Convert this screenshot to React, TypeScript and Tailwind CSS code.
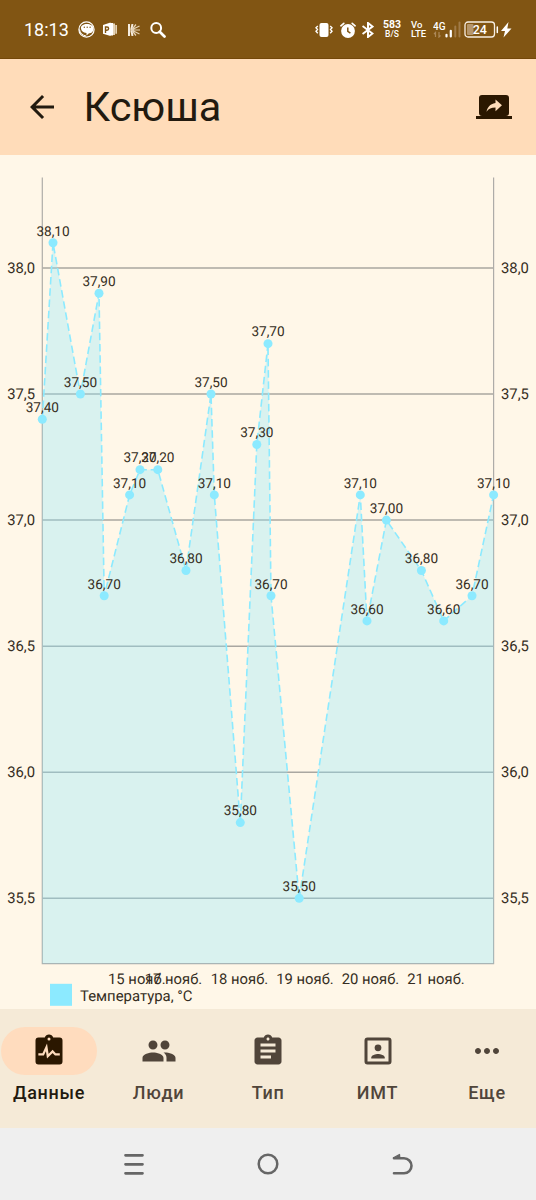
import { useState, type ReactNode } from 'react';
import { MdPeople, MdAssignment, MdMoreHoriz } from 'react-icons/md';

const points = [
  { x: 42.3, value: 37.4 },
  { x: 53, value: 38.1 },
  { x: 80.4, value: 37.5 },
  { x: 99, value: 37.9 },
  { x: 104.2, value: 36.7 },
  { x: 129.6, value: 37.1 },
  { x: 140, value: 37.2 },
  { x: 157.8, value: 37.2 },
  { x: 186, value: 36.8 },
  { x: 211, value: 37.5 },
  { x: 214.3, value: 37.1 },
  { x: 240.3, value: 35.8 },
  { x: 256.8, value: 37.3 },
  { x: 268, value: 37.7 },
  { x: 271, value: 36.7 },
  { x: 299.2, value: 35.5 },
  { x: 360.3, value: 37.1 },
  { x: 367, value: 36.6 },
  { x: 386.4, value: 37.0 },
  { x: 421.4, value: 36.8 },
  { x: 443.7, value: 36.6 },
  { x: 472, value: 36.7 },
  { x: 493.6, value: 37.1 },
];

const ticks = [38, 37.5, 37, 36.5, 36, 35.5];

const dates = [
  { x: 136.8, label: '15 нояб.' },
  { x: 173.5, label: '17 нояб.' },
  { x: 239.5, label: '18 нояб.' },
  { x: 305, label: '19 нояб.' },
  { x: 370.5, label: '20 нояб.' },
  { x: 436, label: '21 нояб.' },
];

const LEFT = 42.3;
const RIGHT = 493.6;
const TOP = 22.5;
const BOTTOM = 808.6;

const toY = (v: number) => 113 + (38 - v) * 252.1;
const format = (v: number, digits: number) => v.toFixed(digits).replace('.', ',');

function StatusBar() {
  return (
    <div className="h-[59px] bg-[#815513] border-b border-[#744809] text-white flex items-center justify-between pl-6 pr-6">
      <div className="flex items-center pt-px">
        <span className="text-[18px] leading-none w-[54px]">18:13</span>
        <svg className="w-[17px] h-[17px]" viewBox="0 0 17 17">
          <circle cx="8.5" cy="8.5" r="7.6" fill="none" stroke="white" strokeWidth="1.2" />
          <path d="M3 7.5C2 1.500 15.500 1.500 15.500 7.500c0 3.500-2.200 4.700-4.500 4.700L8.500 14.500v-2.500C5 11.700 3.300 10 3 7.500z" fill="white" />
          <path d="M1.500 8.500c.5 3.500 3 5.800 6.500 6.500" stroke="white" strokeWidth="1" fill="none" />
          <circle cx="6.300" cy="6.200" r=".7" fill="#815513" />
          <circle cx="9.200" cy="6.200" r=".7" fill="#815513" />
          <circle cx="12.100" cy="6.200" r=".7" fill="#815513" />
        </svg>
        <svg className="w-[14px] h-[15px] ml-2" viewBox="0 0 14 15">
          <path d="M0 3l7.500-2.500v13.500L0 11.800z" fill="white" />
          <path d="M2.500 11V5h1.500a1.500 1.500 0 0 1 0 3.200H2.500" fill="none" stroke="#815513" strokeWidth="1.400" />
          <path d="M7 1h3v12.500H7z" fill="white" />
          <path d="M10 1.500h2v11.500h-2zM12.300 3H14v8.700h-1.700z" fill="#e5d3b7" />
        </svg>
        <svg className="w-3 h-3 ml-[11px]" viewBox="0 0 12 12">
          <path d="M1 0v12M3.200 6L4.500 0M3.200 6L4.500 12" stroke="#f5ecdf" strokeWidth="2" />
          <path d="M3.500 6L8 .5M3.500 6L11.500 2M3.500 6h8.500M3.500 6l8 4M3.500 6L8 11.500" stroke="#e5d3b7" strokeWidth="1.200" />
        </svg>
        <svg className="w-4 h-4 ml-[10px]" viewBox="0 0 16 16" fill="none" stroke="white">
          <circle cx="6.200" cy="6" r="4.900" strokeWidth="2" />
          <path d="M9.700 9.700l4.800 4.800" strokeWidth="2.700" strokeLinecap="round" />
        </svg>
      </div>

      <div className="flex items-center pt-px">
        <svg className="w-[18px] h-4" viewBox="0 0 18 16">
          <rect x="4.500" y="1" width="9" height="14" rx="2" fill="white" />
          <path d="M2.800 4L1 5.700 2.500 7.500 1 9.300l1.800 2M15.200 4L17 5.700l-1.500 1.800L17 9.300l-1.800 2" stroke="white" strokeWidth="1.400" fill="none" />
        </svg>
        <svg className="w-4 h-4 ml-[7px]" viewBox="0 0 16 16">
          <circle cx="8" cy="9" r="6.900" fill="white" />
          <path d="M.9 3.800L3.800 1.300M15.100 3.800L12.200 1.300" stroke="white" strokeWidth="1.700" strokeLinecap="round" />
          <path d="M7.800 5.500V9.400l2.600 1.700" stroke="#815513" strokeWidth="1.500" fill="none" />
        </svg>
        <svg className="w-3 h-4 ml-[6px]" viewBox="0 0 12 16" fill="none" stroke="white" strokeWidth="2">
          <path d="M.5 4L10.500 11.500L6 15V1l4.500 3.500L.5 12" />
        </svg>
        <div className="flex flex-col items-center w-[18px] ml-[9px] font-bold -mt-[3px]">
          <span className="text-[10.500px] leading-[11px]">583</span>
          <span className="text-[8.500px] leading-[8px] font-medium">B/S</span>
        </div>
        <div className="flex flex-col w-[15px] ml-[10px] text-[9.500px] leading-[9px] font-medium -mt-[2px]">
          <span>Vo</span>
          <span>LTE</span>
        </div>
        <svg className="w-[29px] h-[17px] ml-[7px]" viewBox="0 0 29 17">
          <text x="0" y="8.500" fontSize="10" fontWeight="500" fill="white">4G</text>
          <path d="M2.500 16v-4.500L1 13M6 11v5l1.500-1.500" stroke="#ab8859" strokeWidth="1.200" fill="none" />
          <path d="M13.500 13.800V15.500M17.800 9.800V15.500" stroke="white" strokeWidth="2.200" strokeLinecap="round" />
          <path d="M22.300 5.500V15.500M26.500 1.500V15.500" stroke="#a07b48" strokeWidth="2" strokeLinecap="round" />
        </svg>
        <svg className="w-[35px] h-[17px] ml-[2px]" viewBox="0 0 35 17">
          <rect x="1" y="1" width="29.500" height="15" rx="3" fill="none" stroke="#f7efe4" strokeWidth="1.300" />
          <rect x="3" y="3" width="6.500" height="11" rx="1" fill="#b6966b" />
          <text x="15.800" y="12.800" fontSize="12.500" fontWeight="500" textAnchor="middle" fill="white">24</text>
          <path d="M33.300 6v5.500" stroke="white" strokeWidth="1.500" strokeLinecap="round" />
        </svg>
        <svg className="w-[11px] h-4 ml-[2px]" viewBox="0 0 11 16">
          <path d="M7.500 0L0 9h4L2.500 15.500 10.500 6.500H6.300z" fill="white" />
        </svg>
      </div>
    </div>
  );
}

function Header() {
  return (
    <div className="h-[95.500px] bg-[#ffdcb9] flex items-center px-6">
      <button className="w-9 h-9 text-[#221a0f]">
        <svg className="w-9 h-9" viewBox="0 0 24 24" fill="currentColor">
          <path d="M20 11H7.830l5.590-5.590L12 4l-8 8 8 8 1.410-1.410L7.830 13H20v-2z" />
        </svg>
      </button>
      <h1 className="text-[41.500px] leading-none text-[#221a0f] ml-[23.500px] flex-1">Ксюша</h1>
      <button className="text-[#2b1700]">
        <svg className="w-9 h-9" viewBox="0 0 24 24" fill="currentColor">
          <path d="M4 4h16a2 2 0 0 1 2 2v10a2 2 0 0 1-2 2h4v2H0v-2h4a2 2 0 0 1-2-2V6a2 2 0 0 1 2-2z" />
          <path d="M13 7v2.300c-3.900.5-5.400 3.200-6 5.900 1.400-1.900 3.200-2.800 6-2.800v2.400l4.300-3.900z" fill="#ffdcb9" />
        </svg>
      </button>
    </div>
  );
}

function Chart() {
  const line = points.map((p, i) => `${i === 0 ? 'M' : 'L'}${p.x} ${toY(p.value)}`).join(' ');

  return (
    <svg className="block w-[536px] h-[854.500px]" viewBox="0 0 536 854.5" textRendering="geometricPrecision">
      {ticks.map((t) => (
        <path key={t} d={`M${LEFT} ${toY(t)}H${RIGHT}`} stroke="#aaa7a1" strokeWidth="1.5" />
      ))}
      <path d={`M${LEFT} ${TOP}V${BOTTOM}H${RIGHT}V${TOP}`} fill="none" stroke="#aeaca8" strokeWidth="1.2" />
      <path d={`${line} L${RIGHT} ${BOTTOM} L${LEFT} ${BOTTOM}Z`} fill="#8ceaff" fillOpacity=".33" />
      <path d={line} fill="none" stroke="#8ceaff" strokeWidth="1.6" strokeDasharray="7.500 3.750" />
      {points.map((p, i) => (
        <circle key={i} cx={p.x} cy={toY(p.value)} r="4.500" fill="#8ceaff" />
      ))}
      <g fontSize="13.600" textAnchor="middle" fill="#352d22">
        {points.map((p, i) => (
          <text key={i} x={p.x} y={toY(p.value) - 7.2}>{format(p.value, 2)}</text>
        ))}
      </g>
      <g fontSize="14.800" fill="#352d22">
        {ticks.map((t) => (
          <g key={t}>
            <text x="35" y={toY(t) + 5} textAnchor="end">{format(t, 1)}</text>
            <text x="501" y={toY(t) + 5}>{format(t, 1)}</text>
          </g>
        ))}
        {dates.map((d) => (
          <text key={d.label} x={d.x} y="828.600" textAnchor="middle">{d.label}</text>
        ))}
        <text x="80" y="846" fontSize="14.900">Температура, °C</text>
      </g>
      <rect x="50" y="828.800" width="22" height="22" fill="#8ceaff" />
    </svg>
  );
}

const tabs: { label: string; icon: ReactNode }[] = [
  {
    label: 'Данные',
    icon: (
      <svg className="w-9 h-9" viewBox="0 0 24 24">
        <path d="M19 3h-4.180C14.400 1.840 13.300 1 12 1s-2.400.84-2.820 2H5a2 2 0 0 0-2 2v14a2 2 0 0 0 2 2h14a2 2 0 0 0 2-2V5a2 2 0 0 0-2-2zm-7 0a1 1 0 1 1 0 2 1 1 0 0 1 0-2z" fill="currentColor" />
        <path d="M4.900 14.300h3.200l2.200-4.700.9 5.900 3.200-3.200 1.900 2H19.200" fill="none" stroke="#ffdcbe" strokeWidth="1.500" />
      </svg>
    ),
  },
  { label: 'Люди', icon: <MdPeople className="w-9 h-9" /> },
  { label: 'Тип', icon: <MdAssignment className="w-9 h-9" /> },
  {
    label: 'ИМТ',
    icon: (
      <svg className="w-9 h-9" viewBox="0 0 24 24" fill="currentColor">
        <path d="M19 3H5a2 2 0 0 0-2 2v14a2 2 0 0 0 2 2h14a2 2 0 0 0 2-2V5a2 2 0 0 0-2-2zm0 16H5V5h14z" />
        <circle cx="12" cy="9.900" r="2.250" />
        <path d="M16.500 17v-.7c0-1.500-3-2.300-4.500-2.300s-4.500.8-4.500 2.300v.7z" />
      </svg>
    ),
  },
  { label: 'Еще', icon: <MdMoreHoriz className="w-9 h-9" /> },
];

function BottomNav() {
  const [active, setActive] = useState(0);

  return (
    <div className="h-[119px] bg-[#f5ead7] flex justify-between pt-[18px] px-px">
      {tabs.map((tab, i) => (
        <button
          key={tab.label}
          onClick={() => setActive(i)}
          className={`w-24 flex flex-col items-center ${active === i ? 'text-[#2b1700]' : 'text-[#50453a]'}`}
        >
          <span className={`w-24 h-12 rounded-full flex items-center justify-center ${active === i ? 'bg-[#ffdcbe]' : ''}`}>{tab.icon}</span>
          <span className={`text-[18px] leading-6 mt-[6px] font-medium tracking-[0.7px] ${active === i ? 'text-[#221a0f]' : ''}`}>{tab.label}</span>
        </button>
      ))}
    </div>
  );
}

function SystemBar() {
  return (
    <div className="h-[72px] bg-[#efefef] text-[#666] flex items-center justify-center gap-[110px]">
      <svg className="w-6 h-6" viewBox="0 0 24 24" fill="none" stroke="currentColor" strokeWidth="2.700" strokeLinecap="round">
        <path d="M3.500 3.300h17M3.500 12.300h17M3.500 21.300h17" />
      </svg>
      <svg className="w-6 h-6" viewBox="0 0 24 24" fill="none" stroke="currentColor" strokeWidth="2.500">
        <circle cx="12" cy="12" r="9.300" />
      </svg>
      <svg className="w-6 h-6" viewBox="0 0 24 24" fill="none" stroke="currentColor" strokeWidth="2.600" strokeLinecap="round">
        <path d="M4 6.300h10a7.500 7.500 0 0 1 0 15H4" />
        <path d="M3.500 5.800l6-3.300.3 3.500z" fill="currentColor" strokeWidth="1.300" strokeLinejoin="round" />
      </svg>
    </div>
  );
}

export default function App() {
  return (
    <div className="w-[536px] h-[1200px] overflow-hidden bg-[#fff7e8] flex flex-col font-[Roboto,sans-serif]">
      <StatusBar />
      <Header />
      <Chart />
      <BottomNav />
      <SystemBar />
    </div>
  );
}
